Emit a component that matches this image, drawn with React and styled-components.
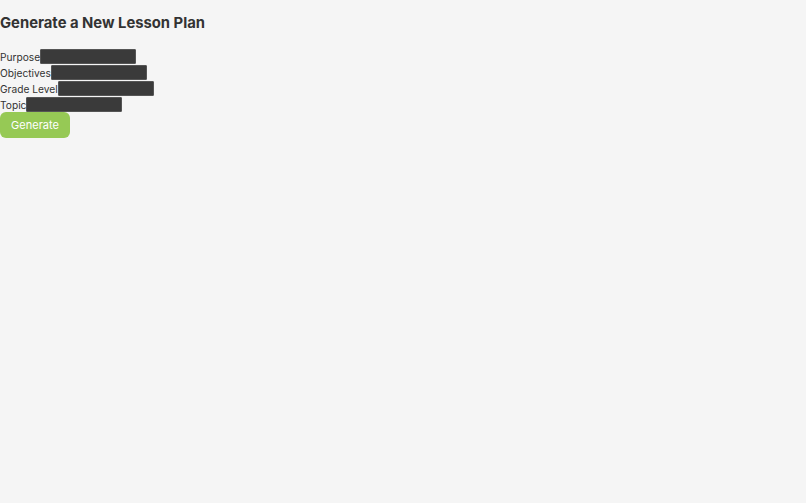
import React from 'react';
import styled, { createGlobalStyle } from 'styled-components';

const GlobalStyle = createGlobalStyle`
  html, body {
    margin: 0;
    padding: 0;
    height: 100%;
    background: #f5f5f5;
  }
  body {
    font-family: Inter, "Noto Sans", "Liberation Sans", sans-serif;
    color: #333;
  }
`;

const Page = styled.div`
  min-height: 503px;
  box-sizing: border-box;
  padding-top: 14px;
  background: #f5f5f5;
`;

const Title = styled.h1`
  margin: 0 0 17px 0;
  font-size: 14.8px;
  font-weight: 700;
  line-height: 18px;
  color: #333;
`;

const Form = styled.form`
  display: flex;
  flex-direction: column;
  align-items: flex-start;
  gap: 1px;
`;

const Field = styled.label`
  display: flex;
  align-items: center;
  height: 15px;
  font-size: 10.2px;
  color: #333;
`;

const Input = styled.input`
  box-sizing: border-box;
  width: 96px;
  height: 15px;
  margin: 0;
  padding: 0 3px;
  background: #3a3a3a;
  border: 1px solid #555;
  border-radius: 1px;
  color: #eee;
  font-size: 10px;
  outline: none;
`;

const Button = styled.button`
  margin-top: -1px;
  width: 70px;
  height: 26px;
  border: none;
  border-radius: 6px;
  background: #96c955;
  color: #fff;
  font-family: inherit;
  font-size: 11px;
  cursor: pointer;
`;

const fields = ['Purpose', 'Objectives', 'Grade Level', 'Topic'];

export default function App() {
  return (
    <>
      <GlobalStyle />
      <Page>
        <Title>Generate a New Lesson Plan</Title>
        <Form onSubmit={(e) => e.preventDefault()}>
          {fields.map((f) => (
            <Field key={f}>
              {f}
              <Input type="text" />
            </Field>
          ))}
          <Button type="submit">Generate</Button>
        </Form>
      </Page>
    </>
  );
}
